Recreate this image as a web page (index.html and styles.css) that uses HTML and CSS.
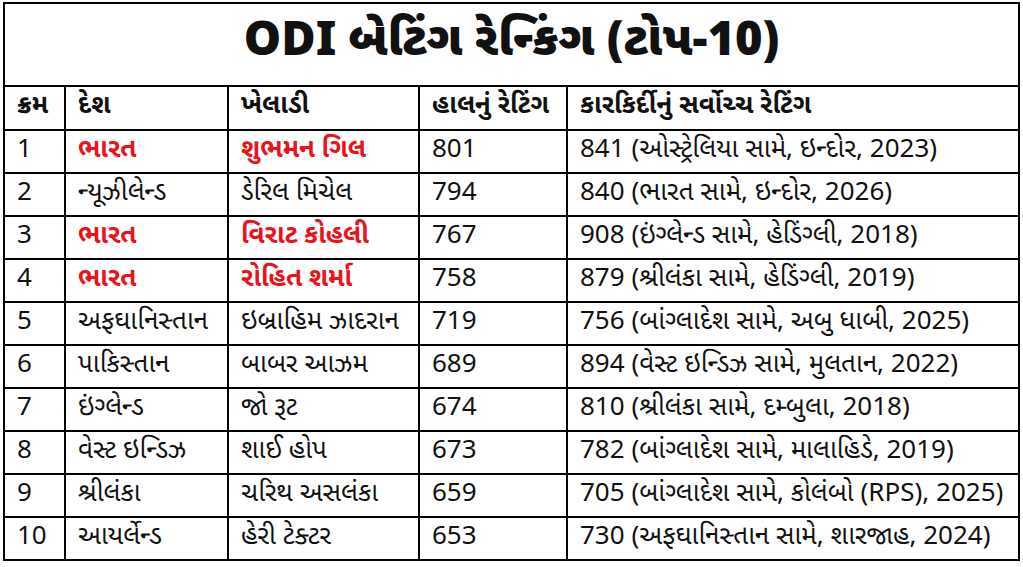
FILE: index.html
```html
<!DOCTYPE html>
<html lang="gu">
<head>
<meta charset="utf-8">
<title>ODI બેટિંગ રેન્કિંગ</title>
<link rel="stylesheet" href="styles.css">
</head>
<body>
<table class="rank">
  <colgroup>
    <col class="c1"><col class="c2"><col class="c3"><col class="c4"><col class="c5">
  </colgroup>
  <tr class="title-row"><th colspan="5" class="title">ODI બેટિંગ રેન્કિંગ (ટોપ-10)</th></tr>
  <tr class="head-row"><th>ક્રમ</th><th>દેશ</th><th>ખેલાડી</th><th>હાલનું રેટિંગ</th><th>કારકિર્દીનું સર્વોચ્ચ રેટિંગ</th></tr>
  <tr><td>1</td><td class="hl">ભારત</td><td class="hl">શુભમન ગિલ</td><td>801</td><td>841 (ઓસ્ટ્રેલિયા સામે, ઇન્દોર, 2023)</td></tr>
  <tr><td>2</td><td>ન્યૂઝીલેન્ડ</td><td>ડેરિલ મિચેલ</td><td>794</td><td>840 (ભારત સામે, ઇન્દોર, 2026)</td></tr>
  <tr><td>3</td><td class="hl">ભારત</td><td class="hl">વિરાટ કોહલી</td><td>767</td><td>908 (ઇંગ્લેન્ડ સામે, હેડિંગ્લી, 2018)</td></tr>
  <tr><td>4</td><td class="hl">ભારત</td><td class="hl">રોહિત શર્મા</td><td>758</td><td>879 (શ્રીલંકા સામે, હેડિંગ્લી, 2019)</td></tr>
  <tr><td>5</td><td>અફઘાનિસ્તાન</td><td>ઇબ્રાહિમ ઝાદરાન</td><td>719</td><td>756 (બાંગ્લાદેશ સામે, અબુ ધાબી, 2025)</td></tr>
  <tr><td>6</td><td>પાકિસ્તાન</td><td>બાબર આઝમ</td><td>689</td><td>894 (વેસ્ટ ઇન્ડિઝ સામે, મુલતાન, 2022)</td></tr>
  <tr><td>7</td><td>ઇંગ્લેન્ડ</td><td>જો રૂટ</td><td>674</td><td>810 (શ્રીલંકા સામે, દમ્બુલા, 2018)</td></tr>
  <tr><td>8</td><td>વેસ્ટ ઇન્ડિઝ</td><td>શાઈ હોપ</td><td>673</td><td>782 (બાંગ્લાદેશ સામે, માલાહિડે, 2019)</td></tr>
  <tr><td>9</td><td>શ્રીલંકા</td><td>ચરિથ અસલંકા</td><td>659</td><td>705 (બાંગ્લાદેશ સામે, કોલંબો (RPS), 2025)</td></tr>
  <tr><td>10</td><td>આયર્લેન્ડ</td><td>હેરી ટેક્ટર</td><td>653</td><td>730 (અફઘાનિસ્તાન સામે, શારજાહ, 2024)</td></tr>
</table>
</body>
</html>
```
FILE: styles.css
```css
html, body { margin: 0; padding: 0; background: #fff; }
body { padding: 2px 0 0 3px; font-family: "Noto Sans Gujarati", "Noto Sans", "DejaVu Sans", sans-serif; color: #111; }
.rank { border-collapse: collapse; table-layout: fixed; width: 1015px; }
.c1 { width: 61px; }
.c2 { width: 163px; }
.c3 { width: 191px; }
.c4 { width: 148px; }
.c5 { width: 452px; }
.rank th, .rank td { border: 2px solid #000; padding: 0 0 0 12px; text-align: left; font-size: 26px; line-height: 1.2; white-space: nowrap; overflow: hidden; }
.rank td { height: 41px; font-weight: 400; }
.rank th { font-weight: 700; }
.title-row th { height: 79px; text-align: center; padding: 0 0 2px; font-size: 47px; line-height: 56px; font-weight: 900; }
.head-row th { height: 42px; }
.rank td.hl { color: #e8141c; font-weight: 700; }
```
